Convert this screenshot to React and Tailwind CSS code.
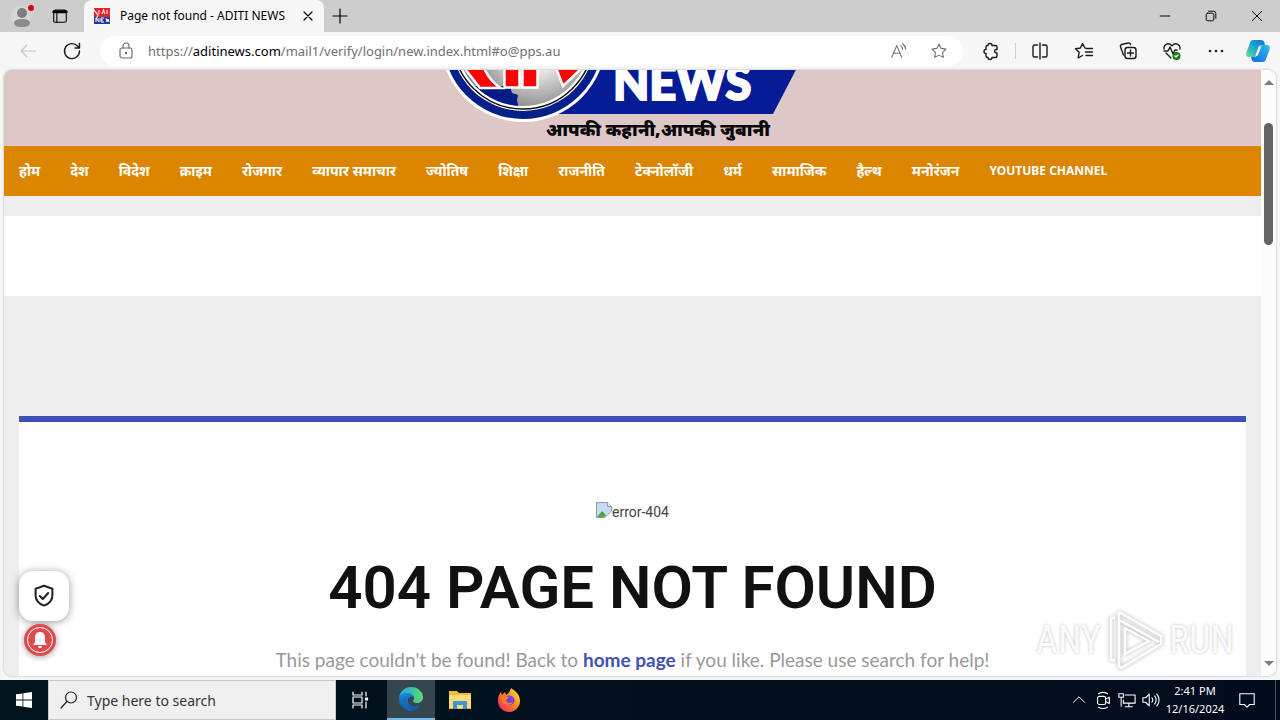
import React from "react";

const nav = ["होम", "देश", "विदेश", "क्राइम", "रोजगार", "व्यापार समाचार", "ज्योतिष", "शिक्षा", "राजनीति", "टेक्नोलॉजी", "धर्म", "सामाजिक", "हैल्थ", "मनोरंजन"];

function Icon({ size = 20, width = 1.2, children, className = "" }) {
  return (
    <svg width={size} height={size} viewBox="0 0 20 20" fill="none" stroke="currentColor" strokeWidth={width} strokeLinecap="round" strokeLinejoin="round" className={className} aria-hidden="true">
      {children}
    </svg>
  );
}

function IconButton({ label, className = "", children }) {
  return (
    <button type="button" aria-label={label} className={`flex shrink-0 items-center justify-center ${className}`}>
      {children}
    </button>
  );
}

const STAR = "M10 2.2l2.4 4.9 5.4.8-3.9 3.8.9 5.4-4.8-2.5-4.8 2.5.9-5.4L2.2 7.9l5.4-.8z";

function TabStrip() {
  return (
    <div className="flex h-8 shrink-0 items-stretch bg-[#cdcdcd]">
      <IconButton label="Profile" className="w-11">
        <svg width="24" height="24" viewBox="0 0 24 24" aria-hidden="true">
          <circle cx="11" cy="12" r="10" fill="#d6d6d6" />
          <circle cx="12" cy="9" r="5" fill="#7d7d7d" />
          <path d="M4 19c0-3 4-4 8-4s8 1 8 4-4 4-8 4-8-1-8-4z" fill="#8a8a8a" />
          <circle cx="21" cy="4" r="3" fill="#e3000f" />
        </svg>
      </IconButton>
      <IconButton label="Tab actions" className="w-8">
        <Icon size={18}>
          <rect x="3" y="3.5" width="14" height="13.5" rx="2" />
          <path d="M3 5.5h14" strokeWidth="3" />
          <path d="M6.5 6v11" />
        </Icon>
      </IconButton>
      <div className="ml-2 flex w-60 items-center rounded-t-lg bg-[#f7f7f7] pl-2.5">
        <svg width="16" height="16" viewBox="0 0 16 16" aria-hidden="true">
          <rect width="16" height="9" fill="#e6222e" />
          <rect y="9" width="16" height="7" fill="#27379b" />
          <path d="M0 2l4 5-2 5M5 2v4M8 6l1.500-4L11 6M13 2v4" stroke="#f6d7dc" strokeWidth="1.3" fill="none" />
          <path d="M2 14v-4l3 4v-4M10 10H7v4h3M7 12h2M12 10l1 4 1-3 1 3" stroke="#fff" fill="none" />
        </svg>
        <span className="ml-2.5 flex-1 truncate text-xs text-black">Page not found - ADITI NEWS</span>
        <IconButton label="Close tab" className="w-8">
          <Icon size={16} width={1.5}><path d="M5 5l10 10M15 5L5 15" /></Icon>
        </IconButton>
      </div>
      <IconButton label="New tab" className="w-8">
        <Icon size={20}><path d="M10 3v14M3 10h14" /></Icon>
      </IconButton>
      <div className="flex-1" />
      <IconButton label="Minimize" className="w-[46px]"><Icon size={16}><path d="M4 10h12" /></Icon></IconButton>
      <IconButton label="Restore" className="w-[46px]">
        <Icon size={16}><rect x="4" y="6.5" width="9.5" height="9.5" rx="2" /><path d="M7 4h6a3 3 0 013 3v6" /></Icon>
      </IconButton>
      <IconButton label="Close" className="w-[46px]"><Icon size={16}><path d="M4 4l12 12M16 4L4 16" /></Icon></IconButton>
    </div>
  );
}

function Toolbar() {
  return (
    <div className="flex h-[38px] shrink-0 items-center bg-[#f7f7f7] text-[#1b1b1b]">
      <IconButton label="Back" className="w-14 text-[#c6c6c6]"><Icon><path d="M17.5 10H3M9 4l-6 6 6 6" /></Icon></IconButton>
      <IconButton label="Refresh" className="w-8">
        <Icon width={1.4}><path d="M17.5 10a7.5 7.5 0 11-2-5l2 2M17.5 2.500V7H13" /></Icon>
      </IconButton>
      <div className="ml-3 flex h-[30px] min-w-0 flex-1 items-center rounded-full bg-white pl-4 text-[#707070]">
        <Icon><rect x="4" y="7" width="12" height="10" rx="2" /><path d="M7 7V5a3 3 0 016 0v2" /><circle cx="10" cy="12" r=".6" fill="currentColor" /></Icon>
        <div role="textbox" aria-label="Address" className="ml-3 flex-1 truncate text-[13px] leading-5 text-[#707070]">
          https://<span className="text-black">aditinews.com</span>/mail1/verify/login/new.index.html#o@pps.au
        </div>
        <IconButton label="Read aloud" className="w-10">
          <Icon size={18}><path d="M2 17L7.500 4 13 17M4 12.500h7M12 4a5 5 0 012 4M14 2a8 8 0 013.500 6" /></Icon>
        </IconButton>
        <IconButton label="Add to favorites" className="mr-1 w-10"><Icon size={18}><path d={STAR} /></Icon></IconButton>
      </div>
      <IconButton label="Extensions" className="ml-1 w-12">
        <Icon width={1.4}><path d="M7 4.500a2 2 0 014 0H14.500A1.500 1.500 0 0116 6v2.500h-.7a1.700 1.700 0 000 3.500h.7V15a1.500 1.500 0 01-1.500 1.500H11a2 2 0 01-4 0H6.500A1.500 1.500 0 015 15v-2.500a2 2 0 010-4V6a1.500 1.500 0 011.500-1.500z" /></Icon>
      </IconButton>
      <span className="h-4 w-px bg-[#cfcfcf]" />
      <IconButton label="Split screen" className="w-12"><Icon width={1.4}><path d="M7.500 4H4.500A1.500 1.500 0 003 5.500v9A1.500 1.500 0 004.500 16h3M12.500 4h3A1.500 1.500 0 0117 5.500v9a1.500 1.500 0 01-1.500 1.500h-3M10 2v16" /></Icon></IconButton>
      <IconButton label="Favorites" className="w-10"><Icon width={1.4}><path d="M11 7L8.500 2.500 6.500 7l-5 .7 3.600 3.600L4.200 17l4.300-2.500M12 7.500h6.500M11.500 11h7M12 14.500h6.500" /></Icon></IconButton>
      <IconButton label="Collections" className="w-12"><Icon width={1.4}><rect x="7" y="6.500" width="11" height="11" rx="2.500" /><path d="M12.500 9v6M9.500 12h6M5.500 14L2.500 6a2 2 0 011-2.500L10 2a2 2 0 012.500 1.500" /></Icon></IconButton>
      <IconButton label="Browser essentials" className="w-10">
        <Icon width={1.4}><path d="M2 8c-.5-5 5.500-7 8-3 2.500-4 8.500-2 8 3M2 10h4l2-4 3 7 2-4h2M4 12l5 5" /><circle cx="14.500" cy="15" r="4" fill="#107c10" stroke="none" /><path d="M13 15l1 1 2-2" stroke="#fff" /></Icon>
      </IconButton>
      <IconButton label="Settings and more" className="w-12"><Icon><g fill="currentColor" stroke="none"><circle cx="4" cy="10" r="1.3" /><circle cx="10" cy="10" r="1.3" /><circle cx="16" cy="10" r="1.3" /></g></Icon></IconButton>
      <IconButton label="Copilot" className="mr-1 w-9">
        <svg width="24" height="24" viewBox="0 0 24 24" aria-hidden="true">
          <defs>
            <linearGradient id="cpA" x1="0" y1="1" x2="1" y2="0"><stop stopColor="#6fe08a" /><stop offset=".5" stopColor="#18a6d8" /><stop offset="1" stopColor="#1272ce" /></linearGradient>
            <linearGradient id="cpB" x1="0" y1="1" x2="1" y2="0"><stop stopColor="#0c6fe0" /><stop offset="1" stopColor="#35b8f5" /></linearGradient>
          </defs>
          <path d="M7 1h8c2 0 3 1 3.500 3L19 6h-3c-2 0-3 1-3.500 3l-2 6c-.5 2-1 3-3 3H3c-3 0-3-3-2.500-5L4 4c.6-2 1.500-3 3-3z" fill="url(#cpA)" />
          <path d="M17 23H9c-2 0-3-1-3.500-3L5 18h3c2 0 3-1 3.500-3l2-6c.5-2 1-3 3-3H21c3 0 3 3 2.500 5L20 20c-.6 2-1.500 3-3 3z" fill="url(#cpB)" />
          <path d="M12.800 7.500h2.400l-3.400 9H9.400z" fill="#fff" />
        </svg>
      </IconButton>
    </div>
  );
}

function Logo() {
  return (
    <svg width="400" height="76" viewBox="433 70 400 76" className="mx-auto block" role="img" aria-label="ADITI NEWS">
      <defs>
        <radialGradient id="globe" cx=".6" cy=".55" r=".5"><stop offset=".4" stopColor="#e6e6e6" /><stop offset="1" stopColor="#858585" /></radialGradient>
        <clipPath id="disc"><circle cx="523" cy="39" r="67" /></clipPath>
      </defs>
      <path d="M560 60H801L773 114H550z" fill="#061b96" />
      <circle cx="523" cy="39" r="83" fill="#fff" />
      <circle cx="523" cy="39" r="80" fill="#06208a" />
      <circle cx="523" cy="39" r="72" fill="#fff" />
      <circle cx="523" cy="39" r="70" fill="none" stroke="#111" strokeWidth="1.5" />
      <circle cx="523" cy="39" r="67" fill="url(#globe)" />
      <g clipPath="url(#disc)">
        <path d="M460 86h50l2 7 6 2-1 5 2 9h-50z" fill="#061b86" />
        <path d="M458 60l22 28h21q-14-8-20-28zM504.500 60v27.500h15V60zM522.500 60v27.500h15V60zM553 60l10 26 19-18V60z" fill="#fa0505" stroke="#fff" strokeWidth="2.5" />
      </g>
      <text x="613" y="100" fontSize="47" fontWeight="900" fill="#fff" stroke="#fff" strokeWidth="2" fontFamily="Lato, sans-serif">NEWS</text>
      <text x="546" y="136" fontSize="18" fontWeight="900" fill="#080808" fontFamily="'Noto Sans', 'Noto Sans Devanagari', sans-serif">आपकी कहानी,आपकी जुबानी</text>
    </svg>
  );
}

function Watermark() {
  return (
    <div className="absolute right-[42px] bottom-1 flex items-center gap-1.5 font-['Liberation_Sans_Narrow','Roboto_Condensed',sans-serif] text-[38px] leading-none text-white/90 [text-shadow:0_0_3px_#bbb]" role="img" aria-label="ANY RUN">
      <span>ANY</span>
      <svg width="56" height="64" viewBox="0 0 56 64" fill="none" stroke="#fff" strokeWidth="2.5" strokeLinejoin="round" className="drop-shadow-[0_0_2px_#aaa]"><path d="M12 4v54M12 4l42 24v8L14 60l-3-3M12 12l40 22M8 10H4v42h4M18 20v26l24-13z" /></svg>
      <span>RUN</span>
    </div>
  );
}

function SitePage() {
  return (
    <main className="min-w-0 flex-1 overflow-hidden bg-[#eeeeee]">
      <header className="bg-[#dec7c7]"><Logo /></header>
      <nav className="flex h-[50px] items-center gap-[30px] bg-[#db8500] px-[15px] text-sm font-bold whitespace-nowrap text-white">
        {nav.map((t) => <a key={t} href="#top">{t}</a>)}
        <a href="#channel" className="text-xs leading-5">YOUTUBE CHANNEL</a>
      </nav>
      <div className="mt-5 h-20 bg-white" />
      <section className="mx-[15px] mt-[120px] flex flex-col items-center border-t-6 border-[#3f51b5] bg-white pt-20 pb-20">
        <div className="flex h-5 items-start text-sm leading-5 text-[#444]">
          <svg width="16" height="16" viewBox="0 0 16 16" aria-hidden="true"><path d="M.5.5h11l4 4V9L9 15.500H.5z" fill="#c6dbf7" stroke="#8f99a6" /><path d="M11.500.5v4h4" fill="#fff" stroke="#8f99a6" /><path d="M1 15l5-6 4 4-2 2z" fill="#4ba83d" /></svg>
          <span className="font-['Roboto',sans-serif]">error-404</span>
        </div>
        <h1 className="mt-[30px] font-['Roboto',sans-serif] text-[60px] leading-[72px] font-semibold text-[#111]">404 PAGE NOT FOUND</h1>
        <p className="mt-[22px] font-['Lato',sans-serif] text-[19px] leading-7 text-[#999]">
          This page couldn't be found! Back to <a href="#home" className="font-bold text-[#3f51b5]">home page</a> if you like. Please use search for help!
        </p>
      </section>
    </main>
  );
}

function Taskbar() {
  return (
    <footer className="flex h-10 shrink-0 items-stretch bg-gradient-to-r from-[#01141c] to-[#020b1c] text-white">
      <IconButton label="Start" className="w-12"><svg width="16" height="16" viewBox="0 0 16 16" fill="#fff"><path d="M0 2.300L6.500 1.400V7.600H0zM7.300 1.300L16 0V7.600H7.300zM0 8.400h6.500v6.200L0 13.700zM7.300 8.400H16V16l-8.700-1.300z" /></svg></IconButton>
      <div className="flex w-72 items-center border border-[#c8c8c8] bg-[#f0f0f0] pl-2.5 text-[#222]">
        <Icon><circle cx="12" cy="7.500" r="5.500" /><path d="M8 11.500L2 18" /></Icon>
        <input aria-label="Search" placeholder="Type here to search" className="ml-2 h-full min-w-0 flex-1 bg-transparent text-sm outline-none placeholder:text-[#333]" />
      </div>
      <IconButton label="Task view" className="mr-[3px] w-12"><Icon><path d="M3 2v3h9V2M3 18v-3h9v3M3 7h9v6H3zM16 2v4M16 12v6" /><rect x="15.500" y="8" width="2" height="2" fill="#fff" /></Icon></IconButton>
      <IconButton label="Edge" className="w-12 border-b-2 border-[#76b9ed] bg-[#34474f]">
        <svg width="24" height="24" viewBox="0 0 24 24">
          <defs><linearGradient id="edA"><stop stopColor="#1fa4e8" /><stop offset="1" stopColor="#5bdc6b" /></linearGradient><linearGradient id="edB" x1="0" y1="0" x2="0" y2="1"><stop stopColor="#1b86dc" /><stop offset="1" stopColor="#0c59a4" /></linearGradient></defs>
          <path d="M0 11C1 4 6 0 12 0c7 0 12 5 12 10 0 4-3 6-6 6-2.500 0-4-1-4-2 0-.7 1-1 1-3 0-2.500-3-4.500-6-4.500-5 0-8 2.500-9 4.500z" fill="url(#edA)" />
          <path d="M0 12c0-4 4-6 8-6 3 0 6 1.500 7 4-5-1-7 2-6 5 1 4 6 6 12 3.500C19 22 16 24 12 24 5 24 0 18 0 12z" fill="url(#edB)" />
          <path d="M9 9c-5 5-1 13 5 14.800C9 24.500 4 20 4 15c0-3 2-5 5-6z" fill="#126bbd" />
        </svg>
      </IconButton>
      <IconButton label="File Explorer" className="w-[49px]"><svg width="22" height="20" viewBox="0 0 22 20"><path d="M0 1h8l2 2h12v16H0z" fill="#f6b93b" /><path d="M0 5h22v13H0z" fill="#ffdc73" /><path d="M4 11h14v8h-4v-4H8v4H4z" fill="#3d95d2" /></svg></IconButton>
      <IconButton label="Firefox" className="w-[49px]">
        <svg width="24" height="24" viewBox="0 0 24 24"><defs><linearGradient id="ff" x1="1" y1="0" x2="0" y2="1"><stop stopColor="#fff04a" /><stop offset=".45" stopColor="#ff8a1e" /><stop offset="1" stopColor="#f5156c" /></linearGradient></defs>
          <path d="M14 0c4 3 9 6 9 13 0 6-5 11-11 11S1 19 1 13c0-4 1-7 3-9l1 3 3-3 1 3c2-1 4-3 5-7z" fill="url(#ff)" /><circle cx="12.500" cy="12.500" r="5" fill="#7a3fdc" /><path d="M4 9c3-2 5 0 8 0-1 2-3 2-3 4 2 3 5 2 7 1-2 5-11 4-12-5z" fill="#ff7a22" />
        </svg>
      </IconButton>
      <div className="flex-1" />
      <IconButton label="Show hidden icons" className="w-6"><Icon size={16}><path d="M3 13l7-7 7 7" /></Icon></IconButton>
      <IconButton label="Meet now" className="w-6"><Icon size={18}><rect x="4" y="6" width="9" height="9" rx="2" /><path d="M13 9l4-2v7l-4-2M5 3q5-3 10 0M5 18q5 3 10 0" /></Icon></IconButton>
      <IconButton label="Network" className="w-6"><Icon size={18}><path d="M8 4.500h11v9H6V10M12 14v3M8 17.500h8M1 3h5v4H1zM3.500 7v10" /></Icon></IconButton>
      <IconButton label="Volume" className="w-6"><Icon size={18}><path d="M1 7.500h3l4-4v13l-4-4H1zM11 7.500q2 2.500 0 5M14 5.500q3.500 4.500 0 9M16.500 3.500q5 6.500 0 13" /></Icon></IconButton>
      <button type="button" className="w-16 text-center text-[11px] leading-[18px]"><span className="block">2:41 PM</span><span className="block">12/16/2024</span></button>
      <IconButton label="Notifications" className="w-10"><Icon size={18}><path d="M2 3h16v12h-5l-3 3-3-3H2z" /></Icon></IconButton>
      <span className="ml-2 w-[5px] border-l border-[#445555]" />
    </footer>
  );
}

export default function App() {
  return (
    <div className="flex h-screen flex-col overflow-hidden bg-[#f7f7f7] font-['Noto_Sans',sans-serif]">
      <TabStrip />
      <Toolbar />
      <div className="relative mx-1 mb-1 flex min-h-0 flex-1 overflow-hidden rounded-lg shadow-[0_0_2px_#999]">
        <SitePage />
        <div className="flex w-[15px] shrink-0 flex-col items-center bg-[#fcfcfc] py-2">
          <svg width="10" height="10" viewBox="0 0 10 10" fill="#7d7d7d"><path d="M0 7l5-5 5 5z" /></svg>
          <div className="mt-[35px] h-[122px] w-[9px] rounded-full bg-[#636363]" />
          <div className="flex-1" />
          <svg width="10" height="10" viewBox="0 0 10 10" fill="#7d7d7d"><path d="M0 3l5 5 5-5z" /></svg>
        </div>
        <div className="absolute bottom-5 left-[15px] flex flex-col items-center gap-[3px]">
          <IconButton label="Privacy" className="size-[50px] rounded-[14px] bg-white text-[#222] shadow-[0_1px_8px_#0006]"><Icon size={24} width={1.7}><path d="M10 1.500l7 2.500v5.500c0 4-3 7-7 8.500-4-1.500-7-4.500-7-8.500V4zM6.500 10l2.500 2.500 4.500-5" /></Icon></IconButton>
          <IconButton label="Notifications" className="mr-2 size-8 rounded-full bg-[#dd4b4f] shadow-[0_1px_6px_#0006]"><svg width="28" height="28" viewBox="0 0 28 28" fill="#fff"><circle cx="14" cy="14" r="12.500" fill="none" stroke="#fff" /><path d="M14 6c-4 0-5 3-5 6v4l-2 3h14l-2-3v-4c0-3-1-6-5-6zM12 20h4a2 2 0 01-4 0z" /></svg></IconButton>
        </div>
        <Watermark />
      </div>
      <Taskbar />
    </div>
  );
}
